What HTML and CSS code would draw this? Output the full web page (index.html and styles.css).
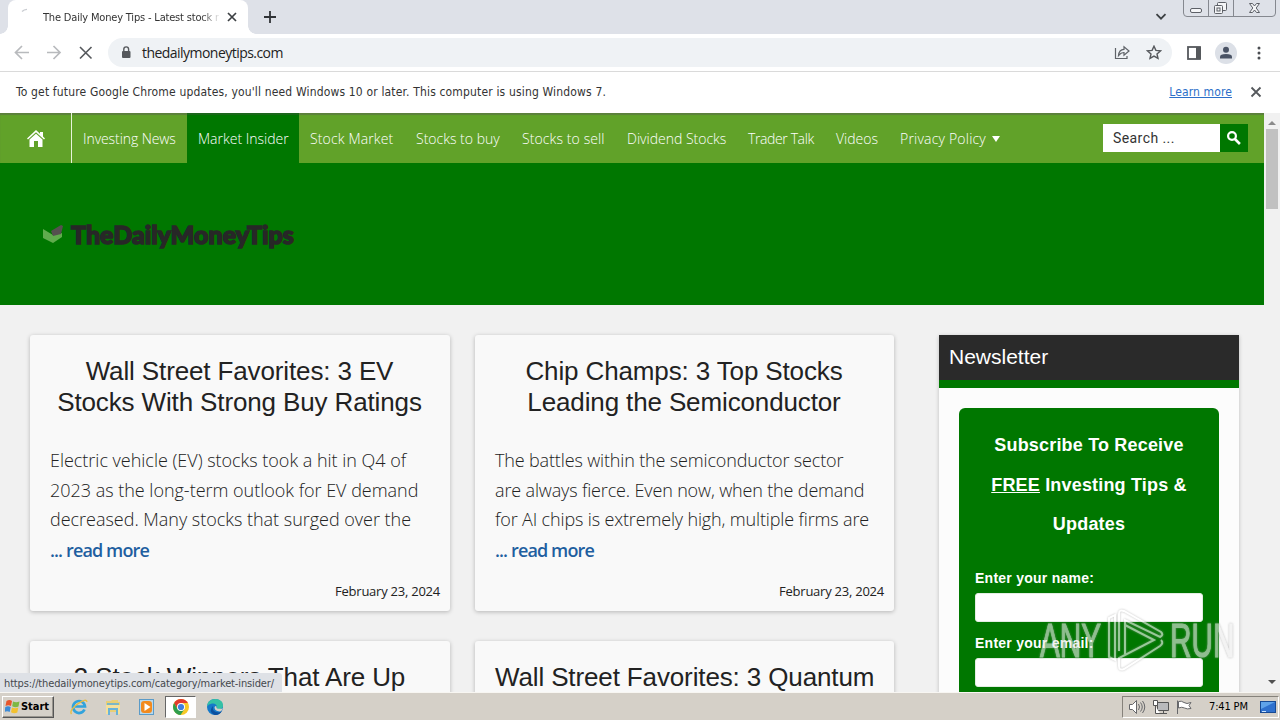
FILE: index.html
```html
<!DOCTYPE html>
<html lang="en">
<head>
<meta charset="utf-8">
<title>The Daily Money Tips - Latest stock news</title>
<link rel="stylesheet" href="styles.css">
</head>
<body>
<div class="screen">
  <header class="tabstrip">
    <div class="tab-foot left"></div>
    <div class="tab">
      <svg class="spinner" width="16" height="16" viewBox="0 0 16 16"><path d="M3 3.500Q5 1.600 8 1.400" fill="none" stroke="#c9ccd1" stroke-width="1.400"/></svg>
      <span class="tab-title">The Daily Money Tips - Latest stock n</span>
      <svg class="tab-close" width="10" height="10" viewBox="0 0 10 10"><path d="M1 1l8 8M9 1L1 9" stroke="#3c4043" stroke-width="1.700"/></svg>
    </div>
    <div class="tab-foot right"></div>
    <svg class="new-tab" width="12" height="12" viewBox="0 0 12 12"><path d="M6 0v12M0 6h12" stroke="#303337" stroke-width="1.800"/></svg>
    <svg class="tab-search" width="12" height="8" viewBox="0 0 12 8"><path d="M1.500 1.200L6 5.700l4.500-4.500" fill="none" stroke="#3c4043" stroke-width="1.800"/></svg>
    <svg class="window-buttons" width="94" height="17" viewBox="0 0 94 17">
      <path d="M.5 0v13q0 3.500 3.500 3.500h85q3.500 0 3.500-3.500V0M25.500 0v16M50.500 0v16" fill="none" stroke="#85888f"/>
      <rect x="7.500" y="8.500" width="11" height="4" rx="1.500" fill="#f4f5f7" stroke="#5d6067"/>
      <rect x="34.500" y="2.500" width="9" height="8" rx="1" fill="#f4f5f7" stroke="#5d6067"/>
      <rect x="31.500" y="5.500" width="8" height="8" rx="1" fill="#f4f5f7" stroke="#5d6067"/>
      <rect x="34" y="8" width="3" height="3" fill="none" stroke="#5d6067"/>
      <path d="M66.500 3.500h3l2 2.500 2-2.500h3l-3.300 4.500 3.300 4.500h-3l-2-2.500-2 2.500h-3l3.300-4.500z" fill="#f4f5f7" stroke="#5d6067"/>
    </svg>
  </header>

  <div class="toolbar">
    <svg class="nav-icons" width="80" height="18" viewBox="0 0 80 18">
      <g fill="none" stroke="#b8babd" stroke-width="1.700"><path d="M15 8.500H1.500M8 2L1.500 8.500 8 15"/><path d="M33 8.500h13M39.500 2L46 8.500 39.500 15"/></g>
      <path d="M66 3l11.500 11.500M77.500 3L66 14.500" stroke="#55585c" stroke-width="1.600"/>
    </svg>
    <div class="omnibox">
      <svg width="10" height="13" viewBox="0 0 10 13"><rect x="1" y="5" width="8.500" height="7" rx="1" fill="#55585c"/><path d="M2.800 5V3.300a2.400 2.400 0 0 1 4.800 0V5" fill="none" stroke="#55585c" stroke-width="1.400"/></svg>
      <span class="url">thedailymoneytips.com</span>
      <svg class="share" width="16" height="16" viewBox="0 0 16 16" fill="none" stroke="#5f6368" stroke-width="1.200"><path d="M1.500 3v10.500H13V11"/><path d="M4.500 10.500Q5 4.500 10 4.300V1.800L15 6l-5 4.300V7.500Q7 7.400 4.500 10.500z"/></svg>
      <svg class="star" width="16" height="16" viewBox="0 0 16 16"><path d="M8 1.200l1.900 4.200 4.500.5-3.400 3 1 4.500L8 11.100l-4 2.300 1-4.500-3.400-3 4.500-.5z" fill="none" stroke="#55585c" stroke-width="1.400"/></svg>
    </div>
    <svg class="side-panel" width="14" height="14" viewBox="0 0 14 14"><rect x="1" y="1" width="12" height="12" fill="#fff" stroke="#55585c" stroke-width="1.800"/><path d="M9 1h5v12H9z" fill="#55585c"/></svg>
    <svg class="avatar" width="22" height="22" viewBox="0 0 22 22"><circle cx="11" cy="11" r="11" fill="#dce0e7"/><circle cx="11" cy="7.800" r="3" fill="#4a5365"/><path d="M5 16.500v-1.800q0-2.700 6-2.700t6 2.700v1.800z" fill="#4a5365"/></svg>
    <svg class="menu" width="4" height="14" viewBox="0 0 4 14" fill="#4a4d52"><circle cx="2" cy="2" r="1.500"/><circle cx="2" cy="7" r="1.500"/><circle cx="2" cy="12" r="1.500"/></svg>
  </div>

  <div class="infobar">
    <span class="info-text">To get future Google Chrome updates, you'll need Windows 10 or later. This computer is using Windows 7.</span>
    <a class="learn">Learn more</a>
    <svg width="12" height="12" viewBox="0 0 12 12"><path d="M1.500 1.500l9 9M10.500 1.500l-9 9" stroke="#55585c" stroke-width="1.800"/></svg>
  </div>

  <div class="viewport">
    <main class="page">
      <nav class="site-nav">
        <a class="home"><svg width="18" height="18" viewBox="0 0 18 18" fill="#fff"><path d="M9 0l4 3.700V2h3v4.500l2 2-1 1L9 2.200 1 9.500l-1-1z"/><path d="M9 3.700L15.500 9.500V17H11v-6H7v6H2.500V9.500z"/></svg></a>
        <a class="n1">Investing News</a><a class="n2 current">Market Insider</a><a class="n3">Stock Market</a><a class="n4">Stocks to buy</a><a class="n5">Stocks to sell</a><a class="n6">Dividend Stocks</a><a class="n7">Trader Talk</a><a class="n8">Videos</a><a class="n9">Privacy Policy<i class="caret"></i></a>
        <div class="search"><span>Search ...</span><b><svg width="16" height="16" viewBox="0 0 16 16" fill="none" stroke="#fff"><circle cx="6" cy="6" r="3.900" stroke-width="2.200"/><path d="M8.900 9l5 5" stroke-width="2.600"/></svg></b></div>
      </nav>
      <section class="banner">
        <svg width="22" height="20" viewBox="0 0 22 20"><path d="M1 5l10 6 9-2v4l-9 6-10-5z" fill="#60ac4d"/><path d="M9 7l10-6 2 1-2 8-8 2z" fill="#55504f"/></svg>
        <span class="brand">TheDailyMoneyTips</span>
      </section>
      <div class="content">
        <div class="posts">
          <article class="card">
            <h2>Wall Street Favorites: 3 EV<br>Stocks With Strong Buy Ratings</h2>
            <p>Electric vehicle (EV) stocks took a hit in Q4 of<br>2023 as the long-term outlook for EV demand<br>decreased. Many stocks that surged over the<br><a>... read more</a></p>
            <time>February 23, 2024</time>
          </article>
          <article class="card narrow">
            <h2>Chip Champs: 3 Top Stocks<br>Leading the Semiconductor</h2>
            <p>The battles within the semiconductor sector<br>are always fierce. Even now, when the demand<br>for AI chips is extremely high, multiple firms are<br><a>... read more</a></p>
            <time>February 23, 2024</time>
          </article>
          <article class="card"><h2>3 Stock Winners That Are Up</h2></article>
          <article class="card"><h2>Wall Street Favorites: 3 Quantum</h2></article>
        </div>
        <aside class="sidebar">
          <h3>Newsletter</h3>
          <form class="subscribe">
            <div class="pitch">Subscribe To Receive<br><u>FREE</u> Investing Tips &amp;<br>Updates</div>
            <label>Enter your name:</label>
            <div class="field"></div>
            <label>Enter your email:</label>
            <div class="field"></div>
          </form>
        </aside>
      </div>
    </main>
    <div class="scrollbar">
      <svg width="8" height="5" viewBox="0 0 8 5"><path d="M0 5l4-4 4 4z" fill="#8a8a8a"/></svg>
      <div class="thumb"></div>
      <svg class="down" width="8" height="5" viewBox="0 0 8 5"><path d="M0 0l4 4 4-4z" fill="#505050"/></svg>
    </div>
    <div class="status">https://thedailymoneytips.com/category/market-insider/</div>
    <div class="watermark">
      <span>ANY</span>
      <svg width="58" height="64" viewBox="0 0 58 64" fill="none" stroke="#fff" stroke-width="2"><path d="M2 9l6-3v45l-6-3z"/><path d="M12 42V5q0-5 5-3l37 21q3 3-1 5L18 11v34"/><path d="M54 31q3 3-1 6L17 60q-5 2-5-3v-8l35-18-29-15"/></svg>
      <span>RUN</span>
    </div>
  </div>

  <footer class="taskbar">
    <div class="start"><svg width="15" height="15" viewBox="0 0 15 15"><path d="M1.500 2q3-2 5.500 0L6 7Q3.500 5.300.5 7z" fill="#e8562b"/><path d="M8 2.500q3 1.500 6.500 0l-1 5q-3 1.500-6.300-.2z" fill="#7db843"/><path d="M.3 8Q3 6.500 5.700 8L4.700 13Q2 11.500-.5 13z" fill="#3d8bd6"/><path d="M7 8.500q3 1.500 6.300 0l-1 5q-3 1.500-6.300-.2z" fill="#f3c12f"/></svg><span>Start</span></div>
    <svg class="task ie" width="18" height="18" viewBox="0 0 18 18"><path d="M14.500 11.500A6 6 0 1 1 15 8.500H5" fill="none" stroke="#32a3dc" stroke-width="2.700"/><path d="M1.500 16Q-1 13 7 6.300 17-.5 16.800 4" fill="none" stroke="#e9bd42" stroke-width="1.400"/></svg>
    <svg class="task folder" width="18" height="18" viewBox="0 0 18 18"><path d="M2 3h5l1-1h6v2h2v10H2z" fill="#e9cf75"/><path d="M3 5h12v3H3z" fill="#7cb7c6"/><path d="M2 7h14v9h-3v-4H6v4H2z" fill="#f5e09b"/><path d="M5 17v-6h8v6" fill="none" stroke="#69b3d8" stroke-width="2"/></svg>
    <svg class="task media" width="18" height="18" viewBox="0 0 18 18"><rect x="1.500" y="1.500" width="14" height="15" fill="#b8d8ec" stroke="#5b9bc8"/><rect x="3" y="3" width="11" height="12" rx="3" fill="#f28a1e"/><path d="M6.500 5v8L12.500 9z" fill="#fff"/></svg>
    <div class="active-task"><svg width="18" height="18" viewBox="0 0 18 18"><circle cx="9" cy="9" r="8" fill="#f7c927"/><path d="M2.100 5A8 8 0 0 1 15.900 5H9L5.500 11z" fill="#e33b2e"/><path d="M2.100 5A8 8 0 0 0 8.500 17L12.500 11H5.500z" fill="#2f9e4e"/><circle cx="9" cy="9" r="4" fill="#fff"/><circle cx="9" cy="9" r="3.100" fill="#3f7fe0"/></svg></div>
    <svg class="task edge" width="18" height="18" viewBox="0 0 18 18"><circle cx="9" cy="9" r="8" fill="#1579c9"/><path d="M1 8.500Q1.500 1 9.500 1 17 1.500 17 7.500q0 4-5 3.500-2-.500-1-2Q10.500 5 6 5.500 2.500 6 1 8.500z" fill="#35c1a5"/><path d="M7 8q-1.500 6 6 6.500l3-1.500Q13 18 8 16.800 2 13 7 8z" fill="#0c4f9e"/><path d="M8.500 9q2-2 2 .3 0 2.200 6.500 1.200l-2 2.800Q8.500 14 8.500 9z" fill="#d5d0c9"/></svg>
    <div class="tray">
      <svg width="18" height="16" viewBox="0 0 18 16" fill="#fff" stroke="#66676a"><path d="M.5 5.500h3l4-4v13l-4-4h-3z"/><path d="M9.500 5q2 3 0 6M11.500 3.500q3.500 4.500 0 9M13.500 2q4.500 6 0 12" fill="none"/></svg>
      <svg width="18" height="16" viewBox="0 0 18 16" fill="#fff" stroke="#555"><path d="M4.500 3.500h11v8h-11z" fill="#b9babc"/><path d="M7 14.500h7M10.500 12v2.500M.5 1.500h4v5h-4zM2.500 7v7.500H7"/></svg>
      <svg width="18" height="16" viewBox="0 0 18 16" fill="#fff" stroke="#66676a"><path d="M.5 15V1.500M1.500 2.500q3-1 5.500 1t7 0l-2 3 2 3q-4 1-6.500-.5t-6 0z"/></svg>
      <span>7:41 PM</span>
      <svg class="desk" width="16" height="14" viewBox="0 0 16 14"><rect x=".5" y="1.500" width="15" height="11" fill="#2f71ce" stroke="#174a94"/><path d="M1 2h14L1 9z" fill="#5fa3ea"/><path d="M2 11.500h4" stroke="#c6e2ff"/></svg>
    </div>
  </footer>
</div>
</body>
</html>
```
FILE: styles.css
```css
* { box-sizing: border-box; }
body { margin: 0; overflow: hidden; }
.screen { width: 1280px; height: 720px; display: flex; flex-direction: column; overflow: hidden; background: #f1f1f1; font-family: "Open Sans", sans-serif; color: #222; }
svg { display: block; flex: none; }
span, a, label, time { white-space: nowrap; }

.tabstrip { height: 34px; flex: none; display: flex; align-items: center; background: #dee1e8; }
.tab-foot { width: 8px; height: 8px; align-self: flex-end; }
.left { background: radial-gradient(circle at 0 0, #dee1e8 7.500px, #fff 8px); }
.right { background: radial-gradient(circle at 8px 0, #dee1e8 7.500px, #fff 8px); }
.tab { width: 240px; height: 34px; background: #fff; border-radius: 8px 8px 0 0; display: flex; align-items: center; padding: 0 11px; }
.spinner { margin-top: -2px; }
.tab-title { width: 176px; margin: 1px 0 0 8px; overflow: hidden; font: 11px/16px "DejaVu Sans Condensed", sans-serif; letter-spacing: -.18px; color: #333; mask-image: linear-gradient(90deg, #000 158px, transparent 178px); }
.tab-close { margin-left: 8px; }
.new-tab { margin-left: 8px; }
.tab-search { margin-left: auto; margin-right: 16px; }
.window-buttons { margin-right: 3px; align-self: flex-start; }

.toolbar { height: 37px; flex: none; display: flex; align-items: center; padding-left: 14px; background: #fff; }
.omnibox { width: 1064px; height: 29px; margin-left: 14px; padding: 0 10px 0 13px; border-radius: 15px; background: #eff2f5; display: flex; align-items: center; }
.url { margin-left: 11px; font-size: 14px; letter-spacing: -.54px; }
.share { margin-left: auto; margin-right: 16px; }
.side-panel { margin-left: 15px; }
.avatar { margin-left: 14px; }
.menu { margin-left: 20px; }

.infobar { height: 42px; flex: none; display: flex; align-items: center; padding: 0 18px 2px 16px; border-top: 1px solid #dadada; background: #fff; font: 12px "DejaVu Sans Condensed", sans-serif; color: #333; }
.info-text { letter-spacing: .16px; }
.learn { margin-left: auto; margin-right: 18px; color: #2c6fc9; text-decoration: underline; letter-spacing: .12px; }

.viewport { height: 579px; flex: none; display: flex; position: relative; overflow: hidden; }
.page { width: 1264px; }
.site-nav { height: 50px; display: flex; background: #61a229; box-shadow: inset 0 2px 1px #5c803c; color: #fff; font-size: 14px; font-weight: 300; line-height: 52px; }
.site-nav > a { padding-left: 11px; }
.site-nav .home { width: 72px; padding: 17px 0 0 27px; border-right: 1px solid #e7f4da; }
.site-nav .current { background: #007700; box-shadow: inset 0 2px 1px #1d671d; }
.n1 { width: 115px; letter-spacing: -.08px; }
.n2 { width: 112px; }
.n3 { width: 106px; letter-spacing: .14px; }
.n4 { width: 106px; }
.n5 { width: 105px; letter-spacing: .1px; }
.n6 { width: 121px; }
.n7 { width: 88px; letter-spacing: -.38px; }
.n8 { width: 64px; }
.n9 { width: 123px; letter-spacing: .2px; }
.caret { display: inline-block; margin: 0 0 2px 6px; border: 4px solid transparent; border-top: 6px solid #fff; border-bottom: 0; }
.search { width: 145px; height: 28px; margin: 11px 0 0 91px; display: flex; background: #fff; color: #333; }
.search span { width: 117px; padding-left: 10px; font: 400 14px/28px Roboto, sans-serif; letter-spacing: .42px; }
.search b { width: 28px; height: 28px; padding: 6px; background: #007700; }

.banner { height: 142px; display: flex; align-items: center; padding: 0 0 0 42px; background: #007700; }
.brand { margin-left: 7px; font: 900 25px/30px Lato, sans-serif; letter-spacing: 0; color: #272727; -webkit-text-stroke: 1.500px #272727; }

.content { display: flex; padding: 30px 25px 0 30px; }
.posts { width: 864px; display: grid; grid-template-columns: 420px 419px; column-gap: 25px; row-gap: 30px; grid-auto-rows: 276px; }
.card { padding: 21px 10px 0 20px; border-radius: 3px; background: #f9f9f9; box-shadow: 0 1px 4px rgba(0,0,0,.25); display: flex; flex-direction: column; }
.card h2 { height: 62px; margin: 0 11px 0 0; font: 400 26px/31px "Liberation Sans", Arial, sans-serif; text-align: center; letter-spacing: -.13px; white-space: nowrap; }
.card p { margin: 28px 0 0; font-size: 18px; font-weight: 300; line-height: 29.500px; letter-spacing: -.02px; color: #222; white-space: nowrap; }
.narrow p { letter-spacing: -.15px; }
.card p a { display: inline-block; line-height: 31.500px; color: #1f5fa0; font-weight: 600; letter-spacing: -.87px; }
.card time { margin: 15px 0 0 auto; font-size: 13px; line-height: 20px; letter-spacing: -.24px; }
.sidebar { width: 300px; margin-left: 45px; background: #fcfcfc; box-shadow: 0 1px 4px rgba(0,0,0,.22); height: 500px; }
.sidebar h3 { height: 53px; margin: 0; padding-left: 10px; border-bottom: 8px solid #007700; background: #2a2a2a; color: #fff; font: 400 21px/44px "Liberation Sans", Arial, sans-serif; letter-spacing: 0; }
.subscribe { width: 260px; height: 400px; margin: 20px; padding: 18px 16px; border-radius: 6px; background: #007700; color: #fff; display: flex; flex-direction: column; font-family: "Liberation Sans", Arial, sans-serif; font-weight: 700; }
.pitch { text-align: center; font-size: 18px; line-height: 39.500px; letter-spacing: .18px; }
.subscribe label { font-size: 14px; line-height: 20px; letter-spacing: .25px; }
.pitch + label { margin-top: 23px; }
.field { height: 29px; flex: none; margin: 5px 0 11px; background: #fff; border-radius: 3px; border: 1px solid #e3eee3; }

.scrollbar { width: 16px; display: flex; flex-direction: column; align-items: center; background: #f1f1f1; padding: 7px 0; }
.thumb { width: 12px; height: 80px; margin-top: 4px; background: #c1c1c1; }
.down { margin-top: auto; }
.status { position: absolute; left: 0; bottom: 0; width: 282px; height: 19px; padding-left: 4px; border-top-right-radius: 3px; background: #dee1e6; color: #45484d; font: 11px/21px "DejaVu Sans Condensed", sans-serif; letter-spacing: -.14px; white-space: nowrap; }
.watermark { position: absolute; left: 1040px; top: 496px; display: flex; align-items: center; gap: 5px; opacity: .6; color: #eee; filter: drop-shadow(0 0 1px #999); font: 400 48px/60px "Liberation Sans", sans-serif; }
.watermark span { width: 62px; transform: scaleX(.62); transform-origin: left; -webkit-text-stroke: 1px #eee; }

.taskbar { height: 28px; flex: none; display: flex; align-items: center; background: #d5d0c8; border-top: 1px solid #f8f6f2; }
.start { width: 52px; height: 22px; margin-left: 2px; padding-left: 2px; display: flex; align-items: center; gap: 1px; border: 1px solid #fff; border-right-color: #555; border-bottom-color: #555; box-shadow: inset -1px -1px #99958e; font: 700 11px "DejaVu Sans Condensed", sans-serif; color: #000; letter-spacing: -.05px; }
.ie { margin-left: 16px; }
.folder, .media { margin-left: 16px; }
.active-task { width: 31px; height: 22px; margin-left: 9px; padding: 1px 6px; background: #fff; border: 1px solid #666; border-right-color: #fff; border-bottom-color: #fff; }
.edge { margin-left: 10px; }
.tray { width: 157px; height: 22px; margin-left: auto; margin-right: 1px; padding-left: 6px; display: flex; align-items: center; gap: 6px; border: 1px solid #86827b; border-right-color: #fff; border-bottom-color: #fff; font: 11px "DejaVu Sans Condensed", sans-serif; color: #000; }
.tray span { margin-left: 8px; width: 42px; letter-spacing: -.15px; }
.desk { margin-left: 3px; }
```
